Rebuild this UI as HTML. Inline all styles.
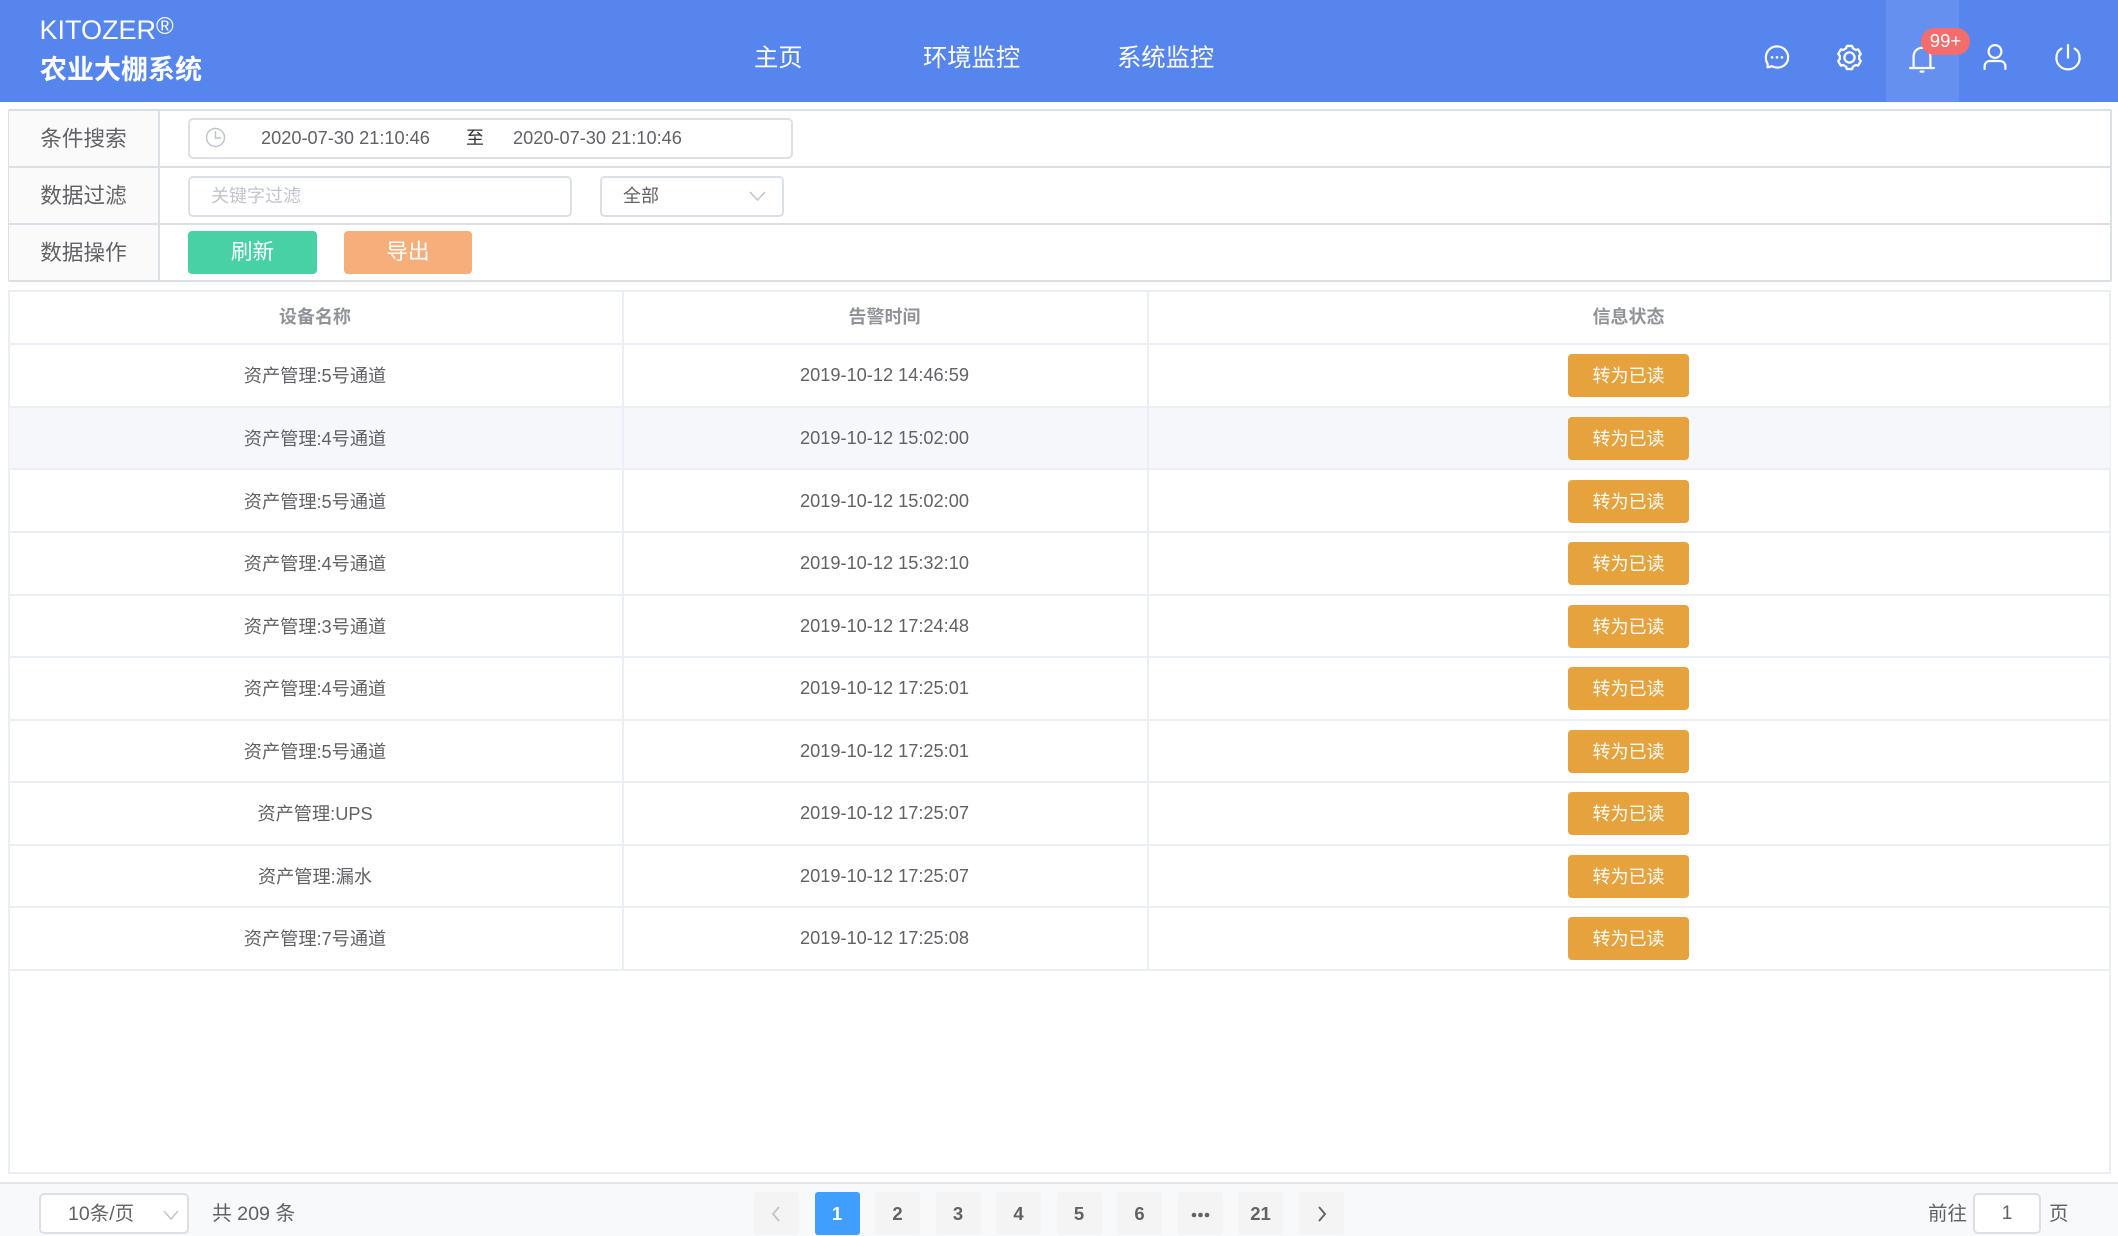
<!DOCTYPE html>
<html lang="zh">
<head>
<meta charset="utf-8">
<title>农业大棚系统</title>
<style>
*{box-sizing:border-box;margin:0;padding:0}
html,body{width:2118px;height:1236px;overflow:hidden;background:#fff}
body{position:relative;font-family:"Liberation Sans","Noto Sans CJK SC",sans-serif;color:#606266}
.a{position:absolute}
.t{position:absolute;white-space:nowrap}
#hd{left:0;top:0;width:2118px;height:102px;background:#5685ee}
.nav{font-size:24.3px;color:#fff;top:41.5px;line-height:34px}
.lab{left:9px;width:151px;background:#fafafa;text-align:center;font-size:21.6px;color:#606266;border-right:2px solid #dcdfe6}
.inp{background:#fff;border:2px solid #dcdfe6;border-radius:5px}
.row{position:absolute;left:9px;width:2101px;border-bottom:2px solid #ebeef5}
.cell{position:absolute;top:0;height:100%;text-align:center;font-size:18.2px;color:#606266;white-space:nowrap}
.btn{position:absolute;left:1559px;width:121px;height:43px;background:#e6a23c;border-radius:4px;color:#fff;font-size:18px;text-align:center;line-height:44px}
.pg{position:absolute;top:1192px;width:45px;height:43px;background:#f4f4f5;border-radius:3px;text-align:center;line-height:43px;font-size:18.5px;font-weight:700;color:#606266}
svg{position:absolute;overflow:visible}
</style>
</head>
<body>
<div class="a" id="hd"></div>
<div class="t" style="left:39.5px;top:14px;font-size:27px;line-height:32px;color:#fff">KITOZER<span style="font-size:24px;position:relative;top:-5px">®</span></div>
<div class="t" style="left:40px;top:52px;font-size:27px;line-height:36px;font-weight:700;color:#fff">农业大棚系统</div>
<div class="t nav" style="left:754px">主页</div>
<div class="t nav" style="left:923px">环境监控</div>
<div class="t nav" style="left:1117px">系统监控</div>

<div class="a" style="left:1886px;top:0;width:73px;height:102px;background:#6690f0"></div>

<!-- chat -->
<svg style="left:1762px;top:42px" width="30" height="30" viewBox="0 0 34 34" fill="none" stroke="#fff" stroke-width="2.5" stroke-linejoin="round" stroke-linecap="round">
<path d="M6.2 28.6 C6.6 26.6 6.6 25.4 6 24 C4.6 21.9 4.4 19.8 4.4 17.4 C4.4 10.4 10 5 17 5 C24 5 29.6 10.4 29.6 17.4 C29.6 24.4 24 29 17 29 C14.6 29 12.6 28.2 10.8 27.4 C9.4 28 7.8 28.6 6.2 28.6 Z"/>
<circle cx="11.4" cy="17.4" r="1.5" fill="#fff" stroke="none"/><circle cx="17" cy="17.4" r="1.5" fill="#fff" stroke="none"/><circle cx="22.6" cy="17.4" r="1.5" fill="#fff" stroke="none"/>
</svg>
<!-- gear -->
<svg style="left:1833.5px;top:41.5px" width="31" height="31" viewBox="0 0 34 34" fill="none" stroke="#fff" stroke-width="2.5" stroke-linejoin="round">
<path d="M14.08 4.33 L19.92 4.33 L20.69 6.85 L23.94 8.73 L26.51 8.13 L29.43 13.2 L27.64 15.12 L27.64 18.88 L29.43 20.8 L26.51 25.87 L23.94 25.27 L20.69 27.15 L19.92 29.67 L14.08 29.67 L13.31 27.15 L10.06 25.27 L7.49 25.87 L4.57 20.8 L6.36 18.88 L6.36 15.12 L4.57 13.2 L7.49 8.13 L10.06 8.73 L13.31 6.85 Z"/>
<circle cx="17" cy="17" r="5.6"/>
</svg>
<!-- bell -->
<svg style="left:1905px;top:40px" width="34" height="34" viewBox="0 0 34 34" fill="none" stroke="#fff" stroke-width="2.2" stroke-linecap="round">
<path d="M5 28 H29"/><path d="M8.6 28 V16.5 C8.6 11.5 12.4 7.8 17 7.8 C21.6 7.8 25.4 11.5 25.4 16.5 V28"/><path d="M15.6 31.6 H18.4"/>
</svg>
<!-- user -->
<svg style="left:1978px;top:40px" width="34" height="34" viewBox="0 0 34 34" fill="none" stroke="#fff" stroke-width="2.2" stroke-linecap="round">
<circle cx="17" cy="11.5" r="6.4"/><path d="M6.6 29 V26.4 C6.6 23.2 9 21 12 21 H22 C25 21 27.4 23.2 27.4 26.4 V29"/>
</svg>
<!-- power -->
<svg style="left:2051px;top:40px" width="34" height="34" viewBox="0 0 34 34" fill="none" stroke="#fff" stroke-width="2.2" stroke-linecap="round">
<path d="M10.4 8.6 C6.6 10.6 5.4 14 5.4 18 C5.4 24.4 10.6 29.4 17 29.4 C23.4 29.4 28.6 24.4 28.6 18 C28.6 14 27.2 10.6 23.6 8.6"/><path d="M17 5 V17.6"/>
</svg>
<div class="a" style="left:1921px;top:28px;width:49px;height:27px;background:#f56c6c;border-radius:14px;color:#fff;font-size:18.5px;line-height:26px;text-align:center">99+</div>

<!-- filter panel -->
<div class="a" style="left:8px;top:109px;width:2104px;height:173px;border:2px solid #dcdfe6;border-radius:2px"></div>
<div class="a lab" style="top:111px;height:55px;line-height:56px">条件搜索</div>
<div class="a lab" style="top:168px;height:55px;line-height:56px">数据过滤</div>
<div class="a lab" style="top:225px;height:55px;line-height:56px">数据操作</div>
<div class="a" style="left:10px;top:166px;width:2100px;height:2px;background:#dcdfe6"></div>
<div class="a" style="left:10px;top:223px;width:2100px;height:2px;background:#dcdfe6"></div>

<div class="a inp" style="left:188px;top:118px;width:605px;height:41px"></div>
<svg style="left:205px;top:127px" width="22" height="22" viewBox="0 0 22 22" fill="none" stroke="#c0c4cc" stroke-width="1.5" stroke-linecap="round"><circle cx="10.5" cy="10.5" r="9"/><path d="M10.5 4.6 V11 H15.6"/></svg>
<div class="t" style="left:261px;top:126px;font-size:18.2px;line-height:24px;color:#606266">2020-07-30 21:10:46</div>
<div class="t" style="left:466px;top:126px;font-size:18px;line-height:24px;color:#303133">至</div>
<div class="t" style="left:513px;top:126px;font-size:18.2px;line-height:24px;color:#606266">2020-07-30 21:10:46</div>

<div class="a inp" style="left:188px;top:176px;width:384px;height:41px"></div>
<div class="t" style="left:211px;top:183px;font-size:18px;line-height:26px;color:#c0c4cc">关键字过滤</div>
<div class="a inp" style="left:600px;top:176px;width:184px;height:41px"></div>
<div class="t" style="left:623px;top:183px;font-size:18px;line-height:26px;color:#606266">全部</div>
<svg style="left:749px;top:190px" width="17" height="12" viewBox="0 0 17 12" fill="none" stroke="#c0c4cc" stroke-width="1.6"><path d="M1 2 L8.5 10 L16 2"/></svg>

<div class="a" style="left:188px;top:231px;width:129px;height:43px;background:#47d1a4;border-radius:4px;color:#fff;font-size:21.6px;line-height:42px;text-align:center">刷新</div>
<div class="a" style="left:344px;top:231px;width:128px;height:43px;background:#f6ae7b;border-radius:4px;color:#fff;font-size:21.6px;line-height:42px;text-align:center">导出</div>

<!-- table -->
<div class="a" style="left:8px;top:290px;width:2103px;height:884px;border:2px solid #ebeef5;border-bottom-width:2px"></div>
<div class="row" style="top:291px;height:54px">
  <div class="cell" style="left:-0.5px;width:613px;line-height:53px;font-size:18px;font-weight:700;color:#909399">设备名称</div>
  <div class="cell" style="left:614px;width:523px;line-height:53px;font-size:18px;font-weight:700;color:#909399">告警时间</div>
  <div class="cell" style="left:1139px;width:961px;line-height:53px;font-size:18px;font-weight:700;color:#909399">信息状态</div>
</div>
<div class="row" style="top:345px;height:62.5px"><div class="cell" style="left:-0.5px;width:613px;line-height:62px">资产管理:5号通道</div><div class="cell" style="left:614px;width:523px;line-height:60px">2019-10-12 14:46:59</div><div class="btn" style="top:9px">转为已读</div></div>
<div class="row" style="top:407.5px;height:62.5px;background:#f5f7fa"><div class="cell" style="left:-0.5px;width:613px;line-height:62px">资产管理:4号通道</div><div class="cell" style="left:614px;width:523px;line-height:60px">2019-10-12 15:02:00</div><div class="btn" style="top:9px">转为已读</div></div>
<div class="row" style="top:470.5px;height:62.5px"><div class="cell" style="left:-0.5px;width:613px;line-height:62px">资产管理:5号通道</div><div class="cell" style="left:614px;width:523px;line-height:60px">2019-10-12 15:02:00</div><div class="btn" style="top:9px">转为已读</div></div>
<div class="row" style="top:533px;height:62.5px"><div class="cell" style="left:-0.5px;width:613px;line-height:62px">资产管理:4号通道</div><div class="cell" style="left:614px;width:523px;line-height:60px">2019-10-12 15:32:10</div><div class="btn" style="top:9px">转为已读</div></div>
<div class="row" style="top:595.5px;height:62.5px"><div class="cell" style="left:-0.5px;width:613px;line-height:62px">资产管理:3号通道</div><div class="cell" style="left:614px;width:523px;line-height:60px">2019-10-12 17:24:48</div><div class="btn" style="top:9px">转为已读</div></div>
<div class="row" style="top:658px;height:62.5px"><div class="cell" style="left:-0.5px;width:613px;line-height:62px">资产管理:4号通道</div><div class="cell" style="left:614px;width:523px;line-height:60px">2019-10-12 17:25:01</div><div class="btn" style="top:9px">转为已读</div></div>
<div class="row" style="top:720.5px;height:62.5px"><div class="cell" style="left:-0.5px;width:613px;line-height:62px">资产管理:5号通道</div><div class="cell" style="left:614px;width:523px;line-height:60px">2019-10-12 17:25:01</div><div class="btn" style="top:9px">转为已读</div></div>
<div class="row" style="top:783px;height:62.5px"><div class="cell" style="left:-0.5px;width:613px;line-height:62px">资产管理:UPS</div><div class="cell" style="left:614px;width:523px;line-height:60px">2019-10-12 17:25:07</div><div class="btn" style="top:9px">转为已读</div></div>
<div class="row" style="top:845.5px;height:62.5px"><div class="cell" style="left:-0.5px;width:613px;line-height:62px">资产管理:漏水</div><div class="cell" style="left:614px;width:523px;line-height:60px">2019-10-12 17:25:07</div><div class="btn" style="top:9px">转为已读</div></div>
<div class="row" style="top:908px;height:62.5px"><div class="cell" style="left:-0.5px;width:613px;line-height:62px">资产管理:7号通道</div><div class="cell" style="left:614px;width:523px;line-height:60px">2019-10-12 17:25:08</div><div class="btn" style="top:9px">转为已读</div></div>
<div class="a" style="left:622px;top:291px;width:2px;height:679px;background:#ebeef5"></div>
<div class="a" style="left:1146.5px;top:291px;width:2px;height:679px;background:#ebeef5"></div>

<!-- footer -->
<div class="a" style="left:0;top:1182px;width:2118px;height:54px;background:#f8f9fa;border-top:2px solid #e4e6ea"></div>
<div class="a inp" style="left:39px;top:1193px;width:150px;height:41px"></div>
<div class="t" style="left:68px;top:1201px;font-size:19.5px;line-height:26px;color:#606266">10条/页</div>
<svg style="left:163px;top:1209px" width="16" height="12" viewBox="0 0 16 12" fill="none" stroke="#c0c4cc" stroke-width="1.5"><path d="M1 2 L8 10 L15 2"/></svg>
<div class="t" style="left:212px;top:1201px;font-size:19.7px;line-height:26px;color:#606266">共 209 条</div>

<div class="pg" style="left:754px;color:#c0c4cc">
<svg style="left:16px;top:14px" width="12" height="16" viewBox="0 0 12 16" fill="none" stroke="#c0c4cc" stroke-width="1.9"><path d="M9 1 L3 8 L9 15"/></svg></div>
<div class="pg" style="left:814.5px;background:#409eff;color:#fff">1</div>
<div class="pg" style="left:875px">2</div>
<div class="pg" style="left:935.5px">3</div>
<div class="pg" style="left:996px">4</div>
<div class="pg" style="left:1056.5px">5</div>
<div class="pg" style="left:1117px">6</div>
<div class="pg" style="left:1177.5px">
<svg style="left:13px;top:20px" width="19" height="6" viewBox="0 0 19 6" fill="#606266"><circle cx="3" cy="3" r="2.3"/><circle cx="9.5" cy="3" r="2.3"/><circle cx="16" cy="3" r="2.3"/></svg></div>
<div class="pg" style="left:1238px">21</div>
<div class="pg" style="left:1298.5px">
<svg style="left:17px;top:14px" width="12" height="16" viewBox="0 0 12 16" fill="none" stroke="#606266" stroke-width="1.9"><path d="M3 1 L9 8 L3 15"/></svg></div>

<div class="t" style="left:1928px;top:1201px;font-size:19.5px;line-height:26px;color:#606266">前往</div>
<div class="a inp" style="left:1973px;top:1193px;width:68px;height:41px;text-align:center;line-height:38px;font-size:19px;color:#606266">1</div>
<div class="t" style="left:2049px;top:1201px;font-size:19.5px;line-height:26px;color:#606266">页</div>
</body>
</html>
